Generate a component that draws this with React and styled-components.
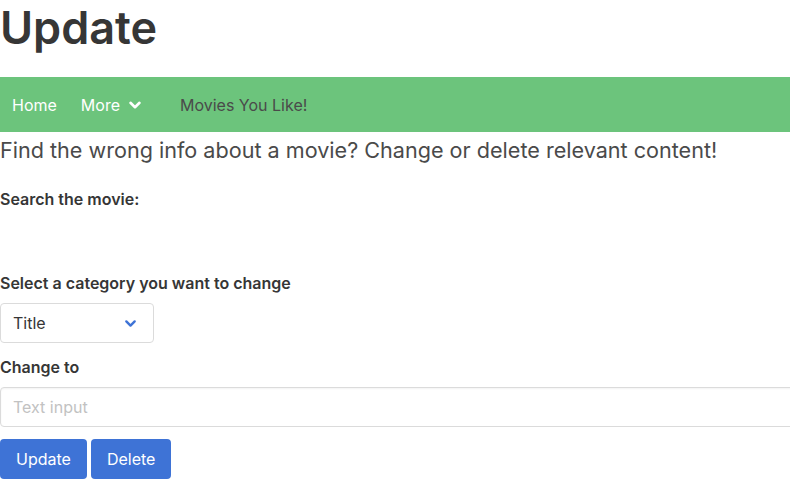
import React from "react";
import styled, { createGlobalStyle } from "styled-components";

const GlobalStyle = createGlobalStyle`
  html, body {
    margin: 0;
    padding: 0;
    background: #fff;
    overflow-x: hidden;
  }
  body {
    font-family: Inter, "Noto Sans", "Liberation Sans", sans-serif;
    color: #4a4a4a;
    font-size: 16px;
  }
`;

const Page = styled.div`
  width: 100%;
`;

const Title = styled.h1`
  margin: 0 0 22px;
  font-size: 45px;
  font-weight: 600;
  line-height: 55px;
  color: #363636;
`;

const Navbar = styled.nav`
  display: flex;
  align-items: center;
  height: 55px;
  background: #6cc47c;
`;

const NavItem = styled.a`
  display: flex;
  align-items: center;
  gap: 8px;
  padding: 0 12px;
  font-size: 16px;
  color: ${(p) => (p.$dark ? "#4a4a4a" : "#fff")};
  margin-left: ${(p) => p.$offset || 0}px;
  text-decoration: none;
`;

const Subtitle = styled.p`
  margin: 4px 0 0;
  font-size: 21.6px;
  line-height: 28px;
  color: #4a4a4a;
`;

const Label = styled.label`
  display: block;
  font-size: 16px;
  font-weight: 600;
  line-height: 24px;
  color: #363636;
  margin-top: ${(p) => p.$top}px;
`;

const SelectBox = styled.div`
  display: flex;
  align-items: center;
  justify-content: space-between;
  box-sizing: border-box;
  width: 154px;
  height: 40px;
  margin-top: 8px;
  padding: 0 16px 0 12px;
  border: 1px solid #dbdbdb;
  border-radius: 4px;
  color: #363636;
  font-size: 16px;
`;

const TextInput = styled.input`
  display: block;
  box-sizing: border-box;
  width: calc(100% + 20px);
  height: 40px;
  margin-top: 8px;
  padding: 0 12px;
  border: 1px solid #dbdbdb;
  border-radius: 4px;
  box-shadow: inset 0 1px 2px rgba(10, 10, 10, 0.05);
  font-family: inherit;
  font-size: 16px;
  color: #363636;
  outline: none;
  &::placeholder {
    color: #c2c2c2;
  }
`;

const Buttons = styled.div`
  display: flex;
  gap: 4px;
  margin-top: 12px;
`;

const Button = styled.button`
  height: 40px;
  padding: 0 16px;
  border: none;
  border-radius: 4px;
  background: #3e73d6;
  color: #fff;
  font-family: inherit;
  font-size: 16px;
`;

const Chevron = ({ color, size = 14 }) => (
  <svg width={size} height={size} viewBox="0 0 14 14" fill="none">
    <path
      d="M2.5 4.8 L7 9.2 L11.5 4.8"
      stroke={color}
      strokeWidth="2.6"
      strokeLinecap="round"
      strokeLinejoin="round"
    />
  </svg>
);

export default function App() {
  return (
    <Page>
      <GlobalStyle />
      <Title>Update</Title>
      <Navbar>
        <NavItem>Home</NavItem>
        <NavItem>
          More <Chevron color="#fff" />
        </NavItem>
        <NavItem $dark $offset={14}>
          Movies You Like!
        </NavItem>
      </Navbar>
      <Subtitle>
        Find the wrong info about a movie? Change or delete relevant content!
      </Subtitle>
      <Label $top={23}>Search the movie:</Label>
      <Label $top={60}>Select a category you want to change</Label>
      <SelectBox>
        Title <Chevron color="#3e73d6" size={13} />
      </SelectBox>
      <Label $top={12}>Change to</Label>
      <TextInput placeholder="Text input" />
      <Buttons>
        <Button>Update</Button>
        <Button>Delete</Button>
      </Buttons>
    </Page>
  );
}
